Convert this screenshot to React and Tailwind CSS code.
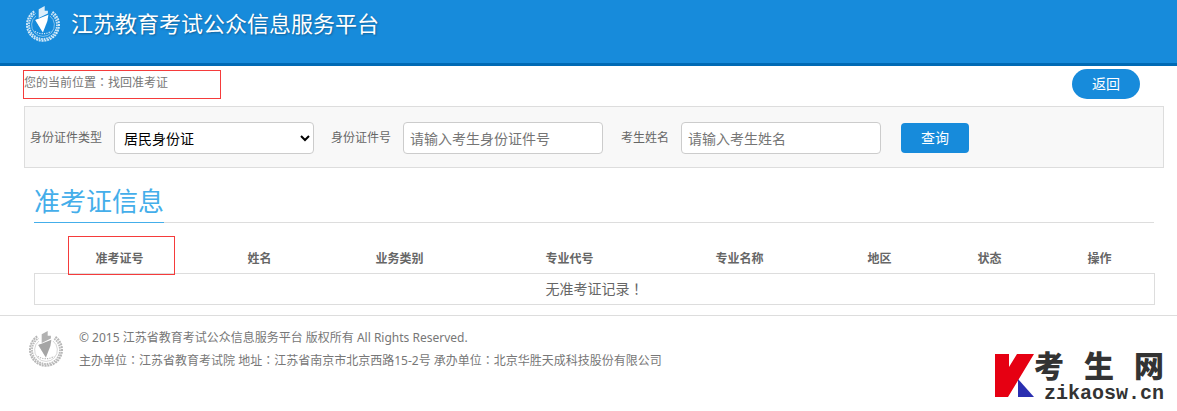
import { useState } from "react";

const COLUMNS = [
  { title: "准考证号", width: "w-[170px]", marked: true },
  { title: "姓名", width: "w-[110px]" },
  { title: "业务类别", width: "w-[170px]" },
  { title: "专业代号", width: "w-[170px]" },
  { title: "专业名称", width: "w-[170px]" },
  { title: "地区", width: "w-[110px]" },
  { title: "状态", width: "w-[110px]" },
  { title: "操作", width: "w-[110px]" },
];

const inputClass =
  "h-8 w-[200px] rounded border border-[#ccc] bg-white px-1.5 text-sm text-black placeholder:text-[#757575]";

// Full-width punctuation centred in its cell
function Mark({ children }) {
  return <span className="font-['Noto_Sans_CJK_TC',sans-serif]">{children}</span>;
}

function Emblem({ className }) {
  return (
    <svg viewBox="0 0 34 36" className={className} fill="currentColor" aria-hidden="true">
      {/* Wreath */}
      <g fill="none" stroke="currentColor">
        <path d="M8.2 5.4A16 16 0 1 0 25.8 5.4" strokeWidth="2" strokeDasharray="2 0.8" opacity="0.8" />
        <path d="M9.4 7.2A14 14 0 1 0 24.6 7.2" strokeWidth="1.9" strokeDasharray="1.7 0.8" strokeDashoffset="1.2" opacity="0.75" />
        <path d="M10 10A11.4 11.4 0 1 0 24 10" strokeWidth="0.7" opacity="0.65" />
        <path d="M8.8 25.4Q17 30 25.2 25.4" strokeWidth="1.2" strokeDasharray="1.2 1.2" opacity="0.8" />
      </g>
      {/* Torch */}
      <path d="M12.7 3.2L18.7 0V4.8H21.9V7.4L12.7 12Z" opacity="0.85" />
      <path d="M9.3 14L22.4 8.8L21.4 15L16.9 26.4Z" />
      <path d="M9.3 14L12 12.9L16.9 26.4Z" opacity="0.5" />
    </svg>
  );
}

function Header() {
  return (
    <header className="flex h-[66px] items-start border-b-[3px] border-[#006ab4] bg-[#178bdb] pt-1.5 pl-[26px] text-white">
      <Emblem className="h-9 w-[34px] shrink-0" />
      <h1 className="ml-[11px] text-[22px] leading-[34px] [text-shadow:1px_1px_2px_rgba(0,0,0,0.3)]">
        江苏教育考试公众信息服务平台
      </h1>
    </header>
  );
}

function SearchForm() {
  const [idType, setIdType] = useState("1");
  const [idNumber, setIdNumber] = useState("");
  const [name, setName] = useState("");

  return (
    <form
      onSubmit={(e) => e.preventDefault()}
      className="flex flex-wrap items-center border border-[#ddd] bg-[#f8f8f8] pt-[15px] pb-[13px] pl-[5px] text-xs"
    >
      <label htmlFor="idType" className="mr-3">身份证件类型</label>
      <select
        id="idType"
        value={idType}
        onChange={(e) => setIdType(e.target.value)}
        className="mr-[17px] h-8 w-[200px] rounded border border-[#ccc] bg-white px-[5px] text-sm text-black"
      >
        <option value="1">居民身份证</option>
      </select>

      <label htmlFor="idNumber" className="mr-3">身份证件号</label>
      <input
        id="idNumber"
        type="text"
        value={idNumber}
        onChange={(e) => setIdNumber(e.target.value)}
        placeholder="请输入考生身份证件号"
        className={`mr-[18px] ${inputClass}`}
      />

      <label htmlFor="name" className="mr-3">考生姓名</label>
      <input
        id="name"
        type="text"
        value={name}
        onChange={(e) => setName(e.target.value)}
        placeholder="请输入考生姓名"
        className={`mr-5 ${inputClass}`}
      />

      <button type="submit" className="h-[30px] w-[68px] rounded bg-[#178bdb] text-sm text-white">
        查询
      </button>
    </form>
  );
}

function ResultTable() {
  return (
    <table className="mt-5 w-full table-fixed border-collapse text-center">
      <thead>
        <tr className="h-[30px] text-xs">
          {COLUMNS.map((col) => (
            <th key={col.title} className={`relative p-0 pt-0.5 font-bold ${col.width}`}>
              {col.title}
              {col.marked && (
                <span className="absolute -top-[7px] left-[33px] h-[39px] w-[107px] border border-[#f53b3b]" />
              )}
            </th>
          ))}
        </tr>
      </thead>
      <tbody>
        <tr className="h-[31px] border border-[#ddd] text-sm">
          <td colSpan={COLUMNS.length} className="p-0">
            无准考证记录<Mark>！</Mark>
          </td>
        </tr>
      </tbody>
    </table>
  );
}

function SiteMark() {
  return (
    <div className="mt-8 mr-[13px] ml-auto flex text-[#333]">
      <svg viewBox="0 0 39 43" className="mt-1.5 h-[43px] w-[39px]" aria-hidden="true">
        <path d="M0 0H14V13L22 0H39L13 43H0Z" fill="#e60012" />
        <path d="M23 25L39 43H23Z" fill="#2a2fb0" />
      </svg>
      <div className="w-[130px]">
        <div className="flex justify-between text-[30px] leading-9 font-black">
          <span>考</span>
          <span>生</span>
          <span>网</span>
        </div>
        <div className="text-right font-['Liberation_Mono',monospace] text-[20px] leading-5 font-bold">zikaosw.cn</div>
      </div>
    </div>
  );
}

function Footer() {
  return (
    <footer className="mt-2.5 flex items-start border-t border-[#ddd] text-xs text-[#777]">
      <Emblem className="mt-[15px] ml-[29px] h-9 w-[34px] shrink-0 text-[#a5a5a5]" />
      <div className="mt-[11px] ml-4 leading-[22px]">
        <p>© 2015 江苏省教育考试公众信息服务平台 版权所有 All Rights Reserved.</p>
        <p>
          主办单位<Mark>：</Mark>江苏省教育考试院 地址<Mark>：</Mark>江苏省南京市北京西路15-2号 承办单位<Mark>：</Mark>
          北京华胜天成科技股份有限公司
        </p>
      </div>
      <SiteMark />
    </footer>
  );
}

export default function App() {
  return (
    <div className="bg-white font-['Noto_Sans','Noto_Sans_CJK_SC',sans-serif] text-[#666]">
      <Header />

      <main className="mr-[13px] ml-6">
        {/* Breadcrumb */}
        <div className="relative flex h-10 items-start justify-between pr-6">
          <p className="pt-1.5 text-xs leading-5 text-[#777]">
            您的当前位置<Mark>：</Mark>找回准考证
          </p>
          <span className="absolute top-1 -left-px h-[29px] w-[198px] border border-[#f53b3b]" />
          <button type="button" className="mt-[3px] h-[30px] w-[68px] rounded-full bg-[#178bdb] text-sm text-white">
            返回
          </button>
        </div>

        <SearchForm />

        <section className="mx-2.5">
          <div className="flex h-[55px] items-end border-b border-[#ddd]">
            <h2 className="-mb-px border-b border-[#44aeea] pb-[3px] text-[26px] leading-9 text-[#44aeea]">准考证信息</h2>
          </div>
          <ResultTable />
        </section>
      </main>

      <Footer />
    </div>
  );
}
